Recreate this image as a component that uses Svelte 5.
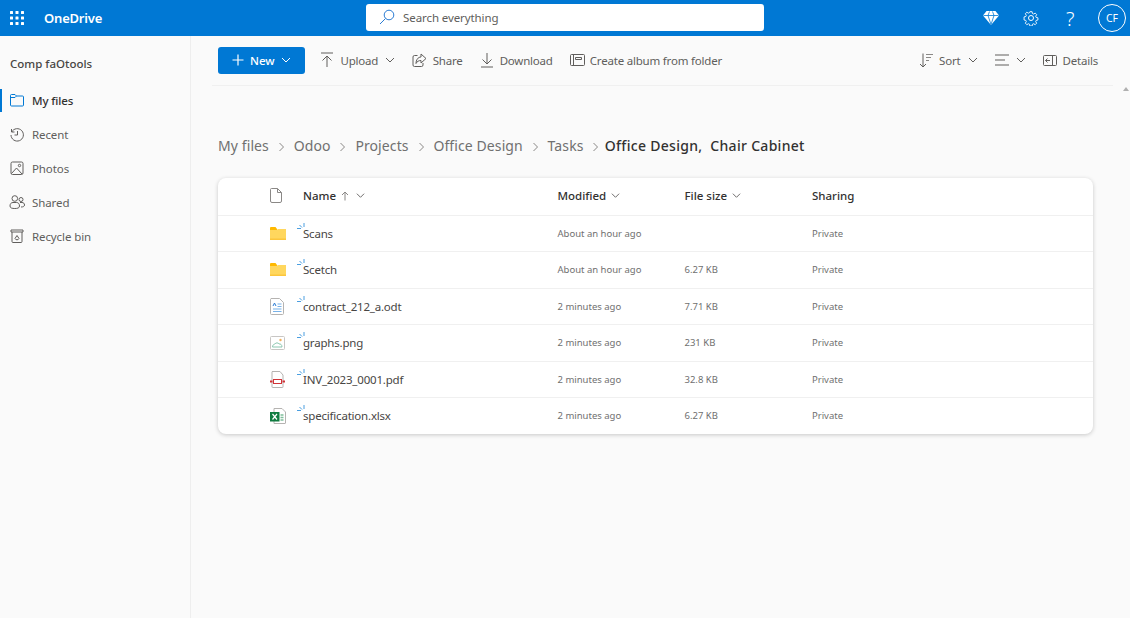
<script>
  const nav = [
    { label: 'My files', icon: 'folder', active: true },
    { label: 'Recent', icon: 'recent' },
    { label: 'Photos', icon: 'photos' },
    { label: 'Shared', icon: 'shared' },
    { label: 'Recycle bin', icon: 'bin' }
  ]
  const crumbs = ['My files', 'Odoo', 'Projects', 'Office Design', 'Tasks']
  const files = [
    { name: 'Scans', type: 'folder', modified: 'About an hour ago', size: '' },
    { name: 'Scetch', type: 'folder', modified: 'About an hour ago', size: '6.27 KB' },
    { name: 'contract_212_a.odt', type: 'doc', modified: '2 minutes ago', size: '7.71 KB' },
    { name: 'graphs.png', type: 'img', modified: '2 minutes ago', size: '231 KB' },
    { name: 'INV_2023_0001.pdf', type: 'pdf', modified: '2 minutes ago', size: '32.8 KB' },
    { name: 'specification.xlsx', type: 'xls', modified: '2 minutes ago', size: '6.27 KB' }
  ]
</script>

{#snippet chev(size)}
  <svg class="chev" width={size} height={size} viewBox="0 0 10 10" fill="none" stroke="currentColor" stroke-width="1"><path d="M1 3l4 4 4-4"/></svg>
{/snippet}

{#snippet navIcon(name)}
  <svg width="16" height="16" viewBox="0 0 16 16" fill="none" stroke-width="1" stroke={name === 'folder' ? '#0078d4' : '#605e5c'}>
    {#if name === 'folder'}
      <path d="M1.500 13V3.500a1 1 0 0 1 1-1h3.500l1.500 1.500h6a1 1 0 0 1 1 1V13a1 1 0 0 1-1 1h-11a1 1 0 0 1-1-1zM1.500 5.500H6l1.500-1.500"/>
    {:else if name === 'recent'}
      <path d="M2.500 3v3h3M2.700 6A6.200 6.200 0 1 1 2 9"/><path d="M8.500 5v4h-3"/>
    {:else if name === 'photos'}
      <rect x="2" y="2" width="12" height="12.500" rx="1.500"/><circle cx="10.500" cy="5.500" r="1.200"/><path d="M2.500 13.500 7.500 8l5.500 6"/>
    {:else if name === 'shared'}
      <circle cx="5.800" cy="4.500" r="2.800"/><circle cx="12" cy="5.500" r="2"/><path d="M1 12c0-2 1-3.500 3-3.500h3.500c2 0 3 1.500 3 3.500s-2 2.500-4.700 2.500S1 14 1 12zM11 8.500h2c1.500 0 2.500 1 2.500 2.500s-1.500 2-3.500 2"/>
    {:else}
      <path d="M2 2h12v2H2zM3 4v9.500a1 1 0 0 0 1 1h8a1 1 0 0 0 1-1V4"/><path d="M6 10.500 8 7.500l2 3-1 1.200H7z"/>
    {/if}
  </svg>
{/snippet}

{#snippet fileIcon(type)}
  {#if type === 'folder'}
    <svg width="16" height="13" viewBox="0 0 16 13"><path fill="#ffb900" d="M0 1a1 1 0 0 1 1-1h4.500L7 2v9H0z"/><path fill="#ffd75e" d="M0 3h6.500L8 2h8v10H0z"/><path fill="#fcc63d" d="M0 11.500h16V13H0z"/></svg>
  {:else if type === 'doc'}
    <svg width="14" height="17" viewBox="0 0 14 17" fill="none"><path d="M1 .5h8.500l4 4v11a1 1 0 0 1-1 1H1.500a1 1 0 0 1-1-1v-14a1 1 0 0 1 .5-1z" fill="#fff" stroke="#b5b3b1"/><path d="M3 8l1.500-3L6 8" stroke="#2b7cd3"/><path d="M7.500 6h4M7.500 8.500h4M3 11h8.500M3 13.500h8.500" stroke="#79b2e8" stroke-width="1.200"/></svg>
  {:else if type === 'img'}
    <svg width="15" height="14" viewBox="0 0 15 14" fill="none"><rect x=".5" y=".5" width="14" height="13" rx="1" fill="#fff" stroke="#c8c6c4"/><circle cx="10.500" cy="4" r="1.200" fill="#f2b15c"/><path d="M2.500 11c0-2 1.500-3 2.500-3 .5-1.500 3.500-1.500 4 0 1.500-.5 3 .8 3 3z" stroke="#8cc7b0"/></svg>
  {:else if type === 'pdf'}
    <svg width="15" height="17" viewBox="0 0 15 17" fill="none"><path d="M2 .5h8l3 3.500v12a.5.500 0 0 1-.5.500h-10a.5.500 0 0 1-.5-.5V1a.5.500 0 0 1 .5-.5z" fill="#fff" stroke="#b5b3b1"/><rect x="3.500" y="8.500" width="8" height="4" fill="#fff" stroke="#d13438" stroke-width="1"/><rect x="0" y="9.500" width="2.500" height="2" fill="#d13438"/><rect x="12.500" y="9.500" width="2.500" height="2" fill="#d13438"/></svg>
  {:else}
    <svg width="16" height="16" viewBox="0 0 16 16" fill="none"><path d="M4 .5h8l3.500 3.500v11a.5.500 0 0 1-.5.500H4z" fill="#fff" stroke="#b5b3b1"/><path d="M10.500 7h3M10.500 9.500h3M10.500 12h3" stroke="#7fbf9b" stroke-width="1.400"/><rect y="4" width="9.500" height="9.500" fill="#107c41"/><path d="M2.500 6 7 11.500M7 6l-4.500 5.500" stroke="#fff" stroke-width="1.200"/></svg>
  {/if}
{/snippet}

<div class="shell">
  <header>
    <div class="brand">
      <svg class="waffle" width="14" height="14" viewBox="0 0 14 14" fill="#fff">
        {#each [0, 5.5, 11] as y}
          {#each [0, 5.5, 11] as x}
            <rect {x} {y} width="3" height="3" rx="0.5" />
          {/each}
        {/each}
      </svg>
      <span class="logo">OneDrive</span>
    </div>
    <div class="search">
      <svg width="16" height="16" viewBox="0 0 16 16" fill="none" stroke="#2b7cd3" stroke-width="1"><circle cx="10" cy="6" r="4.800"/><path d="M6.500 9.500 1 15"/></svg>
      <span>Search everything</span>
    </div>
    <div class="head-actions">
      <svg width="16" height="14" viewBox="0 0 16 14"><path fill="#fff" d="M3.500 0h9L16 4.500 8 14 0 4.500z"/><path fill="none" stroke="#0078d4" stroke-width=".8" d="M.5 4.500h15M5 4.500 8 13.500l3-9M5 4.500 6.500.5M11 4.500 9.500.5"/></svg>
      <svg width="16" height="16" viewBox="0 0 16 16" fill="none" stroke="#fff" stroke-width="1"><circle cx="8" cy="8" r="2.500"/><path d="M6.800 1h2.400l.4 2 1.300.6 1.800-1 1.600 1.700-1.100 1.700.5 1.300 2 .5v2.400l-2 .5-.5 1.300 1.100 1.700-1.600 1.700-1.800-1-1.300.6-.4 2H6.800l-.4-2-1.300-.6-1.800 1-1.600-1.700 1.100-1.700-.5-1.300-2-.5V6.800l2-.5.500-1.300-1.100-1.700 1.600-1.700 1.800 1 1.300-.6z" transform="translate(.8 .8) scale(.9)"/></svg>
      <span class="help">?</span>
      <span class="avatar">CF</span>
    </div>
  </header>

  <div class="body">
    <aside>
      <div class="org">Comp faOtools</div>
      <nav>
        {#each nav as item}
          <div class="nav-item" class:active={item.active}>
            {@render navIcon(item.icon)}
            <span>{item.label}</span>
          </div>
        {/each}
      </nav>
    </aside>

    <main>
      <div class="toolbar">
        <button class="new">
          <svg width="12" height="12" viewBox="0 0 12 12" stroke="#fff" stroke-width="1.200"><path d="M6 .5v11M.5 6h11"/></svg>
          <span>New</span>
          {@render chev(10)}
        </button>
        <div class="tool tool-upload">
          <svg width="14" height="16" viewBox="0 0 14 16" fill="none" stroke="#605e5c"><path d="M1 1h12M7 15V4M2.500 8.500 7 4l4.500 4.500"/></svg>
          <span>Upload</span>{@render chev(10)}
        </div>
        <div class="tool tool-share">
          <svg width="15" height="15" viewBox="0 0 15 15" fill="none" stroke="#605e5c"><path d="M5.500 2.500H2.500a1.500 1.500 0 0 0-1.500 1.500v8a1.500 1.500 0 0 0 1.500 1.500h7a1.500 1.500 0 0 0 1.500-1.500V10"/><path d="M9 1l5 4.500L9 10V7.500C6.500 7.500 5 8.500 4 10.500 4 7 6 4 9 4z"/></svg>
          <span>Share</span>
        </div>
        <div class="tool tool-download">
          <svg width="14" height="16" viewBox="0 0 14 16" fill="none" stroke="#605e5c"><path d="M1 15h12M7 1v11M2.500 7.500 7 12l4.500-4.500"/></svg>
          <span>Download</span>
        </div>
        <div class="tool tool-album">
          <svg width="15" height="12" viewBox="0 0 15 12" fill="none" stroke="#605e5c"><rect x=".5" y=".5" width="14" height="11" rx="1"/><path d="M3.500.500v11M5.500 3.500h6v2h-6z"/></svg>
          <span>Create album from folder</span>
        </div>
        <div class="spacer"></div>
        <div class="tool tool-sort">
          <svg width="14" height="15" viewBox="0 0 14 15" fill="none" stroke="#605e5c"><path d="M4 .5V14M1 11l3 3 3-3"/><path d="M7 1.500h7M7 4.500h5M7 7.500h3" stroke="#8a8886"/></svg>
          <span>Sort</span>{@render chev(10)}
        </div>
        <div class="tool tool-view">
          <svg width="14" height="12" viewBox="0 0 14 12" fill="none" stroke="#605e5c"><path d="M0 1h14M0 6h10M0 11h14"/></svg>
          {@render chev(10)}
        </div>
        <div class="tool tool-details">
          <svg width="14" height="11" viewBox="0 0 14 11" fill="none" stroke="#605e5c"><rect x=".5" y=".5" width="13" height="10" rx="1"/><path d="M9.500.500v10M7 5.500H2.500M4.500 3.500l-2 2 2 2"/></svg>
          <span>Details</span>
        </div>
      </div>

      <div class="content">
        <div class="crumbs">
          {#each crumbs as c}
            <span class="crumb">{c}</span>
            <svg class="sep" width="7" height="10" viewBox="0 0 7 10" fill="none" stroke="#8a8886"><path d="M1.500 1 5.500 5l-4 4"/></svg>
          {/each}
          <span class="crumb current">Office Design,&nbsp; Chair Cabinet</span>
        </div>

        <div class="card">
          <div class="row head">
            <span class="c-icon">
              <svg width="12" height="15" viewBox="0 0 12 15" fill="none" stroke="#8a8886"><path d="M1.500.5h6l4 4v8.500a1.500 1.500 0 0 1-1.500 1.500H2A1.500 1.500 0 0 1 .5 13V1.500a1 1 0 0 1 1-1zM7.500.5v4h4"/></svg>
            </span>
            <span class="c-name">Name
              <svg width="8" height="10" viewBox="0 0 8 10" fill="none" stroke="#8a8886"><path d="M4 9.500V1M1 4l3-3 3 3"/></svg>
              {@render chev(9)}
            </span>
            <span class="c-mod">Modified {@render chev(9)}</span>
            <span class="c-size">File size {@render chev(9)}</span>
            <span class="c-share">Sharing</span>
          </div>
          {#each files as f}
            <div class="row">
              <span class="c-icon">{@render fileIcon(f.type)}</span>
              <span class="c-name file">
                <svg class="spark" width="8" height="8" viewBox="0 0 8 8" fill="none" stroke="#4a9ee0" stroke-width="1"><path d="M0 5.500h4M2.500 2 5 4.500M7 0v4"/></svg>
                {f.name}
              </span>
              <span class="c-mod small">{f.modified}</span>
              <span class="c-size small">{f.size}</span>
              <span class="c-share small">Private</span>
            </div>
          {/each}
        </div>
      </div>
      <div class="scroll-up"></div>
    </main>
  </div>
</div>

<style>
  :global(body) {
    margin: 0;
    background: #fafafa;
    font-family: "Noto Sans", "Open Sans", sans-serif;
    color: #323130;
  }

  .shell {
    width: 1130px;
    height: 618px;
    display: flex;
    flex-direction: column;
    overflow: hidden;
  }

  header {
    height: 36px;
    flex: none;
    background: #0078d4;
    display: flex;
    align-items: center;
  }
  .brand {
    display: flex;
    align-items: center;
    padding-left: 10px;
    gap: 20px;
  }
  .logo {
    color: #fff;
    font-size: 13px;
    font-weight: 600;
    letter-spacing: -0.2px;
  }
  .search {
    margin-left: 264px;
    width: 398px;
    height: 27px;
    margin-top: -2px;
    box-sizing: border-box;
    background: #fff;
    border-radius: 3px;
    display: flex;
    align-items: center;
    gap: 8px;
    padding-left: 13px;
    font-size: 11.5px;
    letter-spacing: -0.1px;
    color: #605e5c;
  }
  .head-actions {
    margin-left: auto;
    display: flex;
    align-items: center;
    color: #fff;
    padding-right: 4px;
  }
  .head-actions svg:nth-child(2) {
    margin-left: 24px;
  }
  .help {
    margin-left: 27px;
    font-size: 20px;
    font-weight: 300;
    width: 11px;
  }
  .avatar {
    margin-left: 21px;
    width: 28px;
    height: 28px;
    box-sizing: border-box;
    border: 1px solid #fff;
    border-radius: 50%;
    display: flex;
    align-items: center;
    justify-content: center;
    font-size: 10.5px;
  }

  .body {
    flex: 1;
    display: flex;
    min-height: 0;
  }

  aside {
    width: 191px;
    flex: none;
    box-sizing: border-box;
    border-right: 1px solid #eeeeee;
  }
  .org {
    font-size: 11.5px;
    font-weight: 500;
    padding: 20px 0 0 10px;
    height: 47px;
    box-sizing: border-box;
    color: #484644;
  }
  .nav-item {
    height: 34px;
    display: flex;
    align-items: center;
    gap: 7px;
    padding-left: 9px;
    font-size: 11.5px;
    letter-spacing: -0.1px;
    color: #605e5c;
    position: relative;
  }
  .nav-item.active {
    color: #323130;
    font-weight: 500;
  }
  .nav-item.active::before {
    content: '';
    position: absolute;
    left: 0;
    top: 6px;
    width: 2px;
    height: 23px;
    background: #0078d4;
  }

  main {
    flex: 1;
    min-width: 0;
    position: relative;
  }

  .toolbar {
    height: 50px;
    margin-left: 21px;
    margin-right: 17px;
    box-sizing: border-box;
    border-bottom: 1px solid #f0f0f0;
    display: flex;
    align-items: center;
    padding: 0 0 0 6px;
    font-size: 11.5px;
    letter-spacing: -0.2px;
    color: #605e5c;
  }
  .new {
    width: 87px;
    height: 27px;
    background: #0078d4;
    border: none;
    border-radius: 3px;
    color: #fff;
    font: 500 11.5px "Noto Sans", sans-serif;
    display: flex;
    align-items: center;
    padding: 0 0 0 14px;
    gap: 6px;
    margin-top: -1px;
  }
  .tool {
    display: flex;
    align-items: center;
    gap: 7px;
    margin-top: -1px;
  }
  .tool-upload { margin-left: 15px; gap: 6.5px; }
  .tool-share { margin-left: 17px; gap: 6px; }
  .tool-download { margin-left: 17px; gap: 6px; }
  .tool-album { margin-left: 17px; gap: 5px; }
  .spacer { flex: 1; }
  .tool-sort { gap: 6px; }
  .tool-sort span { margin-right: 2px; }
  .tool-view { margin-left: 17px; }
  .tool-details { margin-left: 17px; gap: 5px; padding-right: 15px; }

  .content {
    margin-left: 27px;
    width: 875px;
  }
  .crumbs {
    height: 92px;
    box-sizing: border-box;
    padding-top: 50px;
    display: flex;
    align-items: flex-start;
    font-size: 14px;
    letter-spacing: 0.1px;
    color: #707070;
    line-height: 20px;
  }
  .current {
    color: #323130;
    font-weight: 500;
    letter-spacing: 0.3px;
    margin-left: -3.5px;
  }
  .sep {
    margin: 6px 8.9px 0 8.9px;
  }

  .card {
    background: #fff;
    border-radius: 8px;
    box-shadow: 0 1px 4px rgba(0, 0, 0, 0.2);
    overflow: hidden;
  }
  .row {
    height: 36.5px;
    display: grid;
    grid-template-columns: 85px 254.5px 127px 127.5px 1fr;
    align-items: center;
    border-top: 1px solid #f0f0f0;
    box-sizing: border-box;
    font-size: 11.5px;
    color: #484644;
  }
  .head {
    border-top: none;
    font-weight: 500;
    color: #323130;
    padding-bottom: 1px;
  }
  .c-icon {
    display: flex;
    padding-left: 52px;
  }
  .c-name {
    display: flex;
    align-items: center;
    gap: 5px;
    position: relative;
  }
  .file {
    letter-spacing: -0.2px;
  }
  .head :global(.chev) {
    color: #605e5c;
    margin-left: 1px;
  }
  .head .c-name :global(.chev) {
    margin-left: 2px;
  }
  .spark {
    position: absolute;
    left: -6px;
    top: -3px;
  }
  .small {
    font-size: 9.5px;
    color: #707070;
  }
  .head .c-mod, .head .c-size {
    display: flex;
    align-items: center;
    gap: 4px;
  }

  .scroll-up {
    position: absolute;
    right: 1px;
    top: 51px;
    width: 0;
    height: 0;
    border: 3px solid transparent;
    border-top: none;
    border-bottom: 4px solid #b0b0b0;
  }
</style>
